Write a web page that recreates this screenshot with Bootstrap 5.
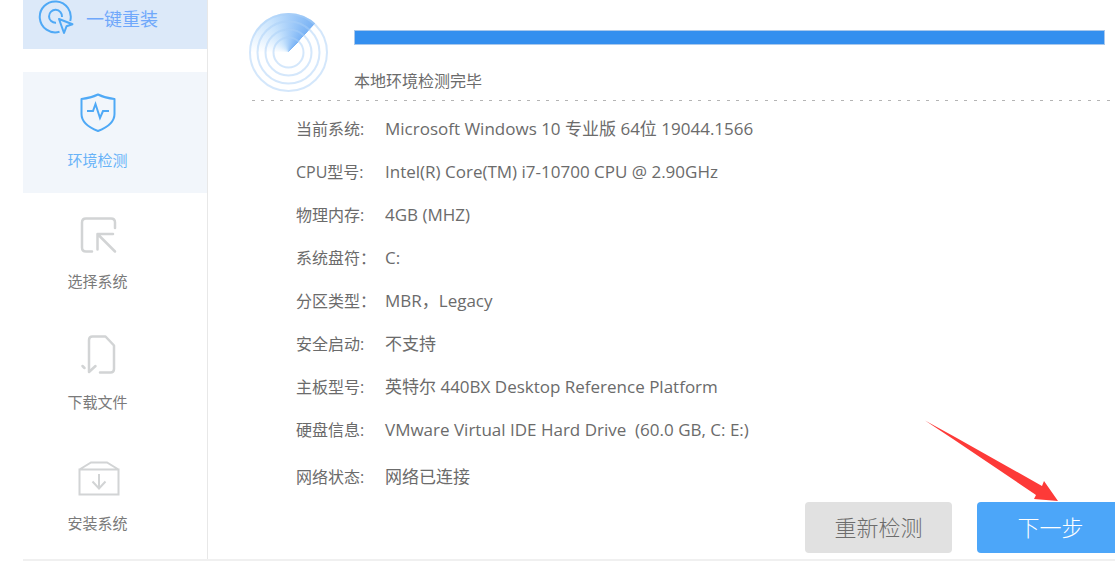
<!DOCTYPE html>
<html lang="zh-CN">
<head>
<meta charset="utf-8">
<meta name="viewport" content="width=device-width, initial-scale=1">
<title>一键重装</title>
<link href="https://cdn.jsdelivr.net/npm/bootstrap@5.3.0/dist/css/bootstrap.min.css" rel="stylesheet">
<script src="https://cdn.jsdelivr.net/npm/bootstrap@5.3.0/dist/js/bootstrap.bundle.min.js"></script>
<style>
  body { font-family: "Open Sans", "Noto Sans CJK SC", sans-serif; font-size: 16px; line-height: 24px; color: #6b6b6b; overflow-x: hidden; background: #fff; }
  svg { display: block; flex: none; }
  a { text-decoration: none; }
  .app-window { margin-left: 23px; border-bottom: 2px solid #f0f0f0; }
  .side-menu { width: 185px; flex: none; border-right: 1px solid #e8e8e8; font-family: "Noto Sans CJK SC", sans-serif; }
  .brand-link { height: 49px; margin-bottom: 23px; padding: 0 0 13px 14px; background: #dce9f9; color: #6fa8fb; font-size: 18px; gap: 11px; }
  .step-link { height: 121px; padding: 18px 35px 0 0; color: #7a7a7a; font-size: 15px; gap: 12px; }
  .step-link.active { background: #f2f6fb; color: #68b3f8; }
  .step-link svg { width: 46px; height: 46px; }
  .main-pane { min-width: 0; }
  .scan-head { height: 100px; padding: 13px 10px 0 41px; gap: 26px; }
  .radar { width: 79px; height: 79px; border-radius: 50%; background: conic-gradient(from 270deg, #fff 0deg, #c9e4fd 60deg, #7ab3f5 132deg, transparent 133deg); }
  .scan-bar { height: 15px; margin-top: 17px; border: 1px solid #a9c8ec; border-radius: 0; --bs-progress-bar-bg: #348fef; }
  .scan-text { margin-top: 24px; }
  .dot-rule { height: 1px; margin: 0 4px 0 44px; background: repeating-linear-gradient(90deg, #b4b4b4 0 3px, transparent 3px 9px, #b4b4b4 9px 12px, transparent 12px 19px); }
  .info-list { padding: 6px 0 0 88px; }
  .info-list > div { height: 43px; }
  .info-list > div:last-child { height: 51px; }
  .info-list dt { width: 89px; font-weight: 400; }
  .info-list dd { font-size: 17px; }
  .action-bar { gap: 25px; margin-right: -9px; padding-bottom: 6px; }
  .action-bar .btn { width: 147px; height: 51px; border: 0; border-radius: 4px; padding: 0 0 3px; font-size: 22px; font-family: "Noto Sans CJK SC", sans-serif; font-weight: 300; }
  .btn-again { background: #e1e1e1; color: #6c6c6c; }
  .btn-next { background: #4ca6f9; color: #fff; }
  .pointer-arrow { right: 65px; bottom: 57px; pointer-events: none; }
</style>
</head>
<body>
<div class="app-window d-flex">
  <nav class="side-menu">
    <a href="#" class="brand-link d-flex align-items-center">
      <svg width="38" height="38" viewBox="0 0 38 38" fill="none" stroke="#4fa9f6" stroke-width="2">
        <path d="M22.500 32.800A15.500 15.500 0 1 1 33.200 22"/>
        <path d="M19 23.800A6.500 6.500 0 1 1 25 18"/>
        <path d="M22 20L35.500 25.200L29.500 27.300L27 34Z" stroke-linejoin="round"/>
      </svg>
      <span>一键重装</span>
    </a>
    <a href="#" class="step-link active d-flex flex-column align-items-center">
      <svg viewBox="0 0 46 46" fill="none" stroke="#4fa9f6" stroke-width="2" stroke-linejoin="round">
        <path d="M23 4.500C18 7 12 8.500 6.500 9V24C6.500 31.500 14 37.500 23 41C32 37.500 39.500 31.500 39.500 24V9C34 8.500 28 7 23 4.500Z"/>
        <path d="M12 21H18L20.500 14L25 28L28 21H34" stroke-linejoin="miter"/>
      </svg>
      <span>环境检测</span>
    </a>
    <a href="#" class="step-link d-flex flex-column align-items-center">
      <svg viewBox="0 0 46 46" fill="none" stroke="#d2d4d5" stroke-width="2.500" stroke-linecap="round" stroke-linejoin="round">
        <path d="M17 40.500H11Q7 40.500 7 36.500V11.500Q7 7.500 11 7.500H36Q40 7.500 40 11.500V17"/>
        <path d="M38 23H22.500V38.500M22.500 23L40 40.500"/>
      </svg>
      <span>选择系统</span>
    </a>
    <a href="#" class="step-link d-flex flex-column align-items-center">
      <svg viewBox="0 0 46 46" fill="none" stroke="#d2d4d5" stroke-width="2.500" stroke-linecap="round" stroke-linejoin="round">
        <path d="M25 40.500H35.500Q39 40.500 39 37V13.500L30.500 4.500H17.500Q14 4.500 14 8V40L20.500 34M7.500 34L9.500 36"/>
      </svg>
      <span>下载文件</span>
    </a>
    <a href="#" class="step-link d-flex flex-column align-items-center">
      <svg viewBox="0 0 46 46" fill="none" stroke="#d2d4d5" stroke-width="2">
        <path d="M4.500 16.500H43.500V41.500H4.500ZM4.500 16.500L16 9.500H32L43.500 16.500"/>
        <path d="M24 21V35M17.500 28.500L24 35.500L30.500 28.500"/>
      </svg>
      <span>安装系统</span>
    </a>
  </nav>

  <main class="main-pane flex-grow-1 d-flex flex-column">
    <div class="scan-head d-flex">
      <div class="radar flex-shrink-0">
        <svg width="79" height="79" viewBox="0 0 79 79" fill="none" stroke="#a9cff8" stroke-opacity=".5" stroke-width="2" aria-hidden="true">
          <circle cx="39.500" cy="39.500" r="38.500"/><circle cx="39.500" cy="39.500" r="31"/>
          <circle cx="39.500" cy="39.500" r="23"/><circle cx="39.500" cy="39.500" r="15"/>
        </svg>
      </div>
      <div class="flex-grow-1">
        <div class="progress scan-bar" role="progressbar" aria-label="环境检测" aria-valuenow="100" aria-valuemin="0" aria-valuemax="100">
          <div class="progress-bar w-100"></div>
        </div>
        <div class="scan-text">本地环境检测完毕</div>
      </div>
    </div>
    <div class="dot-rule"></div>
    <dl class="info-list mb-0">
      <div class="d-flex align-items-center"><dt>当前系统:</dt><dd class="mb-0">Microsoft Windows 10 专业版 64位 19044.1566</dd></div>
      <div class="d-flex align-items-center"><dt>CPU型号:</dt><dd class="mb-0">Intel(R) Core(TM) i7-10700 CPU @ 2.90GHz</dd></div>
      <div class="d-flex align-items-center"><dt>物理内存:</dt><dd class="mb-0">4GB (MHZ)</dd></div>
      <div class="d-flex align-items-center"><dt>系统盘符：</dt><dd class="mb-0">C:</dd></div>
      <div class="d-flex align-items-center"><dt>分区类型：</dt><dd class="mb-0">MBR，Legacy</dd></div>
      <div class="d-flex align-items-center"><dt>安全启动:</dt><dd class="mb-0">不支持</dd></div>
      <div class="d-flex align-items-center"><dt>主板型号:</dt><dd class="mb-0">英特尔 440BX Desktop Reference Platform</dd></div>
      <div class="d-flex align-items-center"><dt>硬盘信息:</dt><dd class="mb-0">VMware Virtual IDE Hard Drive&nbsp; (60.0 GB, C: E:)</dd></div>
      <div class="d-flex align-items-center"><dt>网络状态:</dt><dd class="mb-0">网络已连接</dd></div>
    </dl>
    <div class="action-bar d-flex justify-content-end position-relative mt-auto">
      <button type="button" class="btn btn-again">重新检测</button>
      <button type="button" class="btn btn-next">下一步</button>
      <svg class="pointer-arrow position-absolute" width="134" height="82" viewBox="0 0 134 82" fill="#fd3a38" aria-hidden="true">
        <path d="M0 0.500L30 17L117 66L119 61L133 81L109 79L111 75L28 19Z"/>
      </svg>
    </div>
  </main>
</div>
</body>
</html>
